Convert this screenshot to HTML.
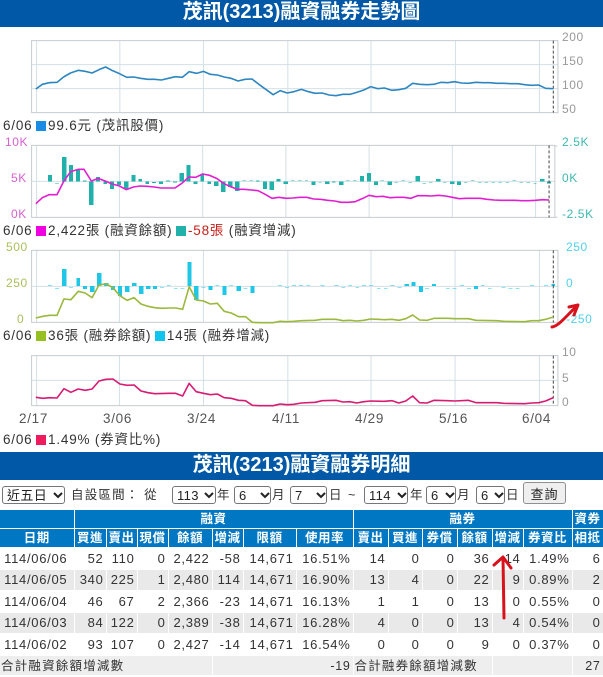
<!DOCTYPE html>
<html lang="zh-Hant"><head><meta charset="utf-8"><title>茂訊融資融券</title>
<style>
html,body{margin:0;padding:0;background:#fff}
body{width:603px;height:677px;position:relative;overflow:hidden;font-family:"Liberation Sans","Noto Sans CJK TC",sans-serif;color:#222}
.bar{position:absolute;left:0;width:603px;background:#0058a6;color:#fff;font-weight:bold;text-align:center;font-size:20px}
.t{position:absolute;white-space:nowrap;line-height:1}
.lg{font-size:13.5px;letter-spacing:.8px;color:#333;left:3px;line-height:16px}
.lg i{display:inline-block;width:10px;height:10px;vertical-align:-1px;margin-left:-1px;margin-right:2px}
.ax{font-size:12px;letter-spacing:.6px}
.tick{font-size:13.5px;letter-spacing:.7px;color:#555}
svg{position:absolute;left:0;top:0}
.g{stroke:#d3e0e6;stroke-width:1;fill:none;vector-effect:non-scaling-stroke}
.b{stroke:#c6ccd0;stroke-width:1;fill:none;vector-effect:non-scaling-stroke}
.l{fill:none;stroke-width:1.6;vector-effect:non-scaling-stroke;stroke-linejoin:round}
.d{stroke:#444;stroke-width:1;stroke-dasharray:3 2;vector-effect:non-scaling-stroke}
select{position:absolute;top:486px;height:18px;box-sizing:border-box;font:13px "Liberation Sans","Noto Sans CJK TC",sans-serif;letter-spacing:.4px;background:#fff;border:1px solid #767676;border-radius:3px;padding:0 0 0 4px;color:#222;appearance:none;-webkit-appearance:none}
.s{position:absolute;top:488px;font-size:12.5px;line-height:14px;color:#333;white-space:nowrap;letter-spacing:1.2px}
button{position:absolute;left:523px;top:482px;width:43px;height:22px;font:13px "Liberation Sans","Noto Sans CJK TC",sans-serif;letter-spacing:1px;background:#efefef;border:1px solid #8f8f8f;border-radius:3px;padding:0;color:#222}
table{position:absolute;left:0;top:510px;width:603px;table-layout:fixed;border-collapse:collapse;font-size:13px;letter-spacing:.7px;color:#333}
td,th{padding:0 2px 0 0;border:1px solid #fff;border-width:0 1px 1px 0;white-space:nowrap;overflow:hidden;text-align:right}
th{background:#0077c2;color:#fff;text-align:center;font-size:12.5px;letter-spacing:.5px;font-weight:bold;height:18px;line-height:16px;padding:0}
td{height:20px;line-height:16px}
tr.z td{background:#e9e9e9}
tr.f td{background:#eeeeee;height:19px;font-size:12.5px}
td.c{text-align:center}
td.lf{text-align:left;letter-spacing:1.2px;padding-left:1px}
</style></head><body>
<div class="bar" style="top:0;height:27px;line-height:25px">茂訊(3213)融資融券走勢圖</div>

<svg width="603" height="677" viewBox="0 0 603 677">
<g transform="scale(.38531,.33333)">
 <path class="g" d="M82 194H1448M82 266H1448M95 122V338M311 122V338M528 122V338M747 122V338M963 122V338M1182 122V338M1400 122V338"/>
 <path class="b" d="M82 122H1448V338H82Z"/>
 <path class="d" d="M1436 122V338"/>
 <polyline class="l" stroke="#2e86c1" points="93,267 110,253 128,248 148,247 165,231 183,219 203,211 221,214 239,219 257,209 274,201 292,212 310,221 329,232 347,231 365,235 383,238 401,238 419,240 437,235 455,230 473,232 491,215 510,220 528,214 546,223 564,225 582,231 600,235 618,243 636,238 654,237 673,254 691,269 709,284 727,272 745,279 763,275 782,268 800,275 818,280 836,279 854,285 872,287 890,283 908,283 926,277 944,270 962,260 980,266 998,264 1017,271 1035,269 1053,265 1071,250 1089,253 1108,254 1126,253 1144,247 1162,248 1180,245 1198,249 1216,250 1235,247 1253,248 1271,248 1289,250 1307,250 1326,251 1344,251 1362,254 1380,256 1398,255 1416,265 1436,266"/>

 <path class="g" d="M82 544H1440M95 436V652M310 436V652M526 436V652M742 436V652M958 436V652M1174 436V652M1390 436V652"/>
 <path class="b" d="M82 436H1440V652H82Z M1440 438H1447M1440 652H1447"/>
 <path fill="#20b2aa" shape-rendering="crispEdges" d="M125 525h10v19h-10zM143 549h10v2h-10zM161 471h11v73h-11zM179 495h11v49h-11zM197 510h11v34h-11zM215 541h10v3h-10zM231 544h12v71h-12zM249 531h11v13h-11zM268 544h10v8h-10zM286 544h10v23h-10zM304 544h10v11h-10zM322 544h11v24h-11zM341 525h11v19h-11zM359 537h10v7h-10zM377 544h10v8h-10zM395 546h10v3h-10zM413 544h10v8h-10zM431 541h10v3h-10zM449 545h10v2h-10zM466 519h11v25h-11zM484 495h11v49h-11zM502 544h10v8h-10zM520 522h10v22h-10zM538 544h10v8h-10zM556 544h11v14h-11zM574 544h11v32h-11zM592 544h11v17h-11zM610 544h11v29h-11zM629 541h9v2h-9zM647 541h9v2h-9zM665 542h9v2h-9zM682 544h11v23h-11zM700 544h11v26h-11zM718 537h10v7h-10zM736 544h11v8h-11zM755 541h9v2h-9zM773 541h9v2h-9zM791 541h9v2h-9zM808 544h11v11h-11zM826 546h9v2h-9zM844 544h11v8h-11zM862 545h9v2h-9zM880 544h11v11h-11zM898 541h9v2h-9zM916 541h9v2h-9zM934 528h11v16h-11zM952 519h11v25h-11zM970 544h11v11h-11zM988 541h9v2h-9zM1006 544h11v11h-11zM1024 547h9v2h-9zM1042 541h9v2h-9zM1060 547h9v2h-9zM1079 528h11v16h-11zM1096 549h9v2h-9zM1114 547h9v2h-9zM1132 537h11v7h-11zM1150 547h9v2h-9zM1168 544h11v8h-11zM1186 544h11v11h-11zM1204 547h9v2h-9zM1222 541h9v2h-9zM1240 547h9v2h-9zM1258 547h9v2h-9zM1276 547h9v2h-9zM1294 547h9v2h-9zM1312 547h9v2h-9zM1330 541h9v2h-9zM1348 547h9v2h-9zM1366 547h9v2h-9zM1384 549h9v2h-9zM1402 537h11v7h-11zM1420 544h10v7h-10z"/>
 <path class="d" d="M1425 436V652"/>
 <polyline class="l" stroke="#e01fd0" points="93,611 110,593 128,584 148,584 165,545 183,515 203,508 218,508 237,543 255,535 273,543 291,552 310,558 328,569 346,561 364,558 382,559 400,561 418,564 436,564 454,564 472,550 490,531 508,532 526,522 544,526 562,535 580,550 598,560 616,568 634,568 652,570 670,572 688,583 706,595 724,592 742,595 760,594 778,592 796,592 814,597 832,598 850,601 868,603 886,607 904,607 922,605 940,596 958,586 976,590 994,589 1012,593 1030,592 1048,592 1066,595 1084,587 1102,587 1120,588 1138,586 1156,588 1174,592 1192,596 1210,595 1228,595 1246,595 1264,598 1282,600 1300,601 1318,601 1336,601 1354,602 1372,602 1390,601 1408,599 1425,600"/>
</g>

<g transform="translate(0,235) scale(.38531,.33333)">
 <path class="g" d="M82 154H1448M95 46V262M310 46V262M528 46V262M747 46V262M963 46V262M1181 46V262M1400 46V262"/>
 <path class="b" d="M82 46H1448V262H82Z"/>
 <path fill="#1fc6e6" shape-rendering="crispEdges" d="M125 150h10v2h-10zM143 159h10v2h-10zM161 102h11v51h-11zM179 156h10v2h-10zM198 129h10v24h-10zM216 153h10v9h-10zM234 153h11v18h-11zM252 114h11v39h-11zM270 144h11v9h-11zM288 153h11v12h-11zM306 153h11v30h-11zM325 153h11v18h-11zM343 144h11v9h-11zM361 153h11v24h-11zM379 153h11v9h-11zM397 153h11v9h-11zM415 156h10v2h-10zM433 150h10v2h-10zM451 159h10v2h-10zM469 159h10v2h-10zM486 81h11v72h-11zM504 153h11v42h-11zM523 156h10v2h-10zM541 153h11v12h-11zM559 150h10v2h-10zM577 153h11v27h-11zM595 150h10v2h-10zM614 153h11v15h-11zM632 159h10v2h-10zM650 153h11v21h-11zM722 150h10v2h-10zM740 156h10v2h-10zM758 150h10v2h-10zM776 150h10v2h-10zM795 150h10v2h-10zM832 150h10v2h-10zM868 150h10v2h-10zM886 156h10v2h-10zM904 150h10v2h-10zM922 156h10v2h-10zM940 150h10v2h-10zM958 150h10v2h-10zM978 159h10v2h-10zM996 159h10v2h-10zM1014 150h10v2h-10zM1032 156h10v2h-10zM1050 147h11v6h-11zM1068 141h11v12h-11zM1087 153h11v18h-11zM1103 159h10v2h-10zM1121 147h11v6h-11zM1157 159h10v2h-10zM1175 159h10v2h-10zM1194 150h10v2h-10zM1212 159h10v2h-10zM1230 153h11v9h-11zM1248 150h10v2h-10zM1266 159h10v2h-10zM1302 156h10v2h-10zM1320 159h10v2h-10zM1338 159h10v2h-10zM1376 150h10v2h-10zM1412 150h10v2h-10zM1431 147h10v6h-10z"/>
 <path class="d" d="M1436 46V262"/>
 <polyline class="l" stroke="#9ab93c" points="93,249 111,244 129,241 148,241 166,192 184,194 203,169 221,174 239,188 257,150 275,146 293,158 311,182 330,196 348,188 366,207 384,214 402,218 420,220 438,219 456,219 474,223 491,155 509,195 528,198 546,207 564,205 582,229 600,234 619,245 637,245 655,262 673,263 709,263 727,259 745,260 763,259 782,257 818,256 836,253 872,253 890,257 908,256 926,258 944,256 962,252 980,253 998,254 1017,253 1035,256 1053,251 1071,240 1089,255 1108,256 1126,250 1162,250 1180,251 1216,251 1235,256 1289,257 1307,259 1362,260 1380,257 1398,257 1416,253 1436,246"/>

 <path class="g" d="M82 436H1448M95 362V512M310 362V512M528 362V512M747 362V512M963 362V512M1181 362V512M1400 362V512"/>
 <path class="b" d="M82 362H1448V512H82Z"/>
 <path class="d" d="M1436 362V512"/>
 <polyline class="l" stroke="#d81b72" points="93,487 111,490 129,488 148,489 166,461 184,472 203,462 221,466 239,462 257,438 275,433 293,432 311,447 330,451 348,450 366,468 384,473 402,476 438,475 456,475 474,483 491,445 509,470 528,475 546,479 564,477 582,488 600,490 619,496 637,497 655,511 673,512 709,512 727,507 745,509 763,508 782,504 818,502 836,497 872,496 890,501 908,500 926,504 944,500 962,498 998,499 1017,497 1035,504 1053,498 1071,483 1089,503 1108,504 1126,496 1162,497 1180,498 1216,496 1235,503 1289,503 1307,505 1362,506 1380,504 1398,503 1416,498 1436,488"/>
</g>
</svg>

<div class="t ax" style="left:562px;top:31px;color:#999">200</div>
<div class="t ax" style="left:562px;top:55px;color:#999">150</div>
<div class="t ax" style="left:562px;top:79px;color:#999">100</div>
<div class="t ax" style="left:562px;top:103px;color:#999">50</div>
<div class="t lg" style="top:118px">6/06 <i style="background:#1b8ce3"></i>99.6元 (茂訊股價)</div>

<div class="t ax" style="left:5px;top:136px;color:#d860cf">10K</div>
<div class="t ax" style="left:11px;top:172px;color:#d860cf">5K</div>
<div class="t ax" style="left:11px;top:208px;color:#d860cf">0K</div>
<div class="t ax" style="left:562px;top:136px;color:#3fb7b0">2.5K</div>
<div class="t ax" style="left:562px;top:172px;color:#3fb7b0">0K</div>
<div class="t ax" style="left:562px;top:208px;color:#3fb7b0">-2.5K</div>
<div class="t lg" style="top:223px">6/06 <i style="background:#f000e0"></i>2,422張 (融資餘額) <i style="background:#20b2aa"></i><span style="color:#c8201c">-58張</span> (融資增減)</div>

<div class="t ax" style="left:6px;top:241px;color:#a8bf5e">500</div>
<div class="t ax" style="left:6px;top:277px;color:#a8bf5e">250</div>
<div class="t ax" style="left:17px;top:313px;color:#a8bf5e">0</div>
<div class="t ax" style="left:566px;top:241px;color:#4fd0e8">250</div>
<div class="t ax" style="left:566px;top:277px;color:#4fd0e8">0</div>
<div class="t ax" style="left:566px;top:313px;color:#4fd0e8">-250</div>
<div class="t lg" style="top:328px">6/06 <i style="background:#95bf22"></i>36張 (融券餘額) <i style="background:#10c4ee"></i>14張 (融券增減)</div>

<div class="t ax" style="left:562px;top:346px;color:#999">10</div>
<div class="t ax" style="left:562px;top:372px;color:#999">5</div>
<div class="t ax" style="left:562px;top:396px;color:#999">0</div>
<div class="t tick" style="left:19px;top:412px">2/17</div>
<div class="t tick" style="left:103px;top:412px">3/06</div>
<div class="t tick" style="left:187px;top:412px">3/24</div>
<div class="t tick" style="left:272px;top:412px">4/11</div>
<div class="t tick" style="left:355px;top:412px">4/29</div>
<div class="t tick" style="left:439px;top:412px">5/16</div>
<div class="t tick" style="left:522px;top:412px">6/04</div>
<div class="t lg" style="top:432px">6/06 <i style="background:#ee1a5e"></i>1.49% (券資比%)</div>

<div class="bar" style="top:452px;height:28px;line-height:26px">茂訊(3213)融資融券明細</div>

<select style="left:2px;width:63px"><option>近五日</option></select>
<div class="s" style="left:71px">自設區間： 從</div>
<select style="left:172px;width:44px"><option>113</option></select><div class="s" style="left:217px">年</div>
<select style="left:234px;width:37px"><option>6</option></select><div class="s" style="left:272px">月</div>
<select style="left:290px;width:37px"><option>7</option></select><div class="s" style="left:329px">日</div>
<div class="s" style="left:348px">~</div>
<select style="left:364px;width:44px"><option>114</option></select><div class="s" style="left:410px">年</div>
<select style="left:426px;width:30px"><option>6</option></select><div class="s" style="left:457px">月</div>
<select style="left:476px;width:29px"><option>6</option></select><div class="s" style="left:506px">日</div>
<button>查詢</button>
<svg width="603" height="677" viewBox="0 0 603 677" style="pointer-events:none">
<path d="M54 493l4 4 4-4M205 493l4 4 4-4M261 493l4 4 4-4M317 493l4 4 4-4M398 493l4 4 4-4M446 493l4 4 4-4M495 493l4 4 4-4" fill="none" stroke="#222" stroke-width="2"/>
</svg>

<table>
<colgroup><col style="width:74px"><col style="width:32px"><col style="width:31px"><col style="width:31px"><col style="width:44px"><col style="width:31px"><col style="width:53px"><col style="width:57px"><col style="width:35px"><col style="width:34px"><col style="width:35px"><col style="width:35px"><col style="width:31px"><col style="width:49px"><col style="width:31px"></colgroup>
<tr><th></th><th colspan="7">融資</th><th colspan="6">融券</th><th>資券</th></tr>
<tr><th>日期</th><th>買進</th><th>賣出</th><th>現償</th><th>餘額</th><th>增減</th><th>限額</th><th>使用率</th><th>賣出</th><th>買進</th><th>券償</th><th>餘額</th><th>增減</th><th>券資比</th><th>相抵</th></tr>
<tr style="height:22px"><td class="c" style="height:21px">114/06/06</td><td>52</td><td>110</td><td>0</td><td>2,422</td><td>-58</td><td>14,671</td><td>16.51%</td><td>14</td><td>0</td><td>0</td><td>36</td><td>14</td><td>1.49%</td><td>6</td></tr>
<tr class="z"><td class="c">114/06/05</td><td>340</td><td>225</td><td>1</td><td>2,480</td><td>114</td><td>14,671</td><td>16.90%</td><td>13</td><td>4</td><td>0</td><td>22</td><td>9</td><td>0.89%</td><td>2</td></tr>
<tr><td class="c" style="height:21px">114/06/04</td><td>46</td><td>67</td><td>2</td><td>2,366</td><td>-23</td><td>14,671</td><td>16.13%</td><td>1</td><td>1</td><td>0</td><td>13</td><td>0</td><td>0.55%</td><td>0</td></tr>
<tr class="z"><td class="c">114/06/03</td><td>84</td><td>122</td><td>0</td><td>2,389</td><td>-38</td><td>14,671</td><td>16.28%</td><td>4</td><td>0</td><td>0</td><td>13</td><td>4</td><td>0.54%</td><td>0</td></tr>
<tr><td class="c" style="height:21px">114/06/02</td><td>93</td><td>107</td><td>0</td><td>2,427</td><td>-14</td><td>14,671</td><td>16.54%</td><td>0</td><td>0</td><td>0</td><td>9</td><td>0</td><td>0.37%</td><td>0</td></tr>
<tr class="f"><td class="lf" colspan="5">合計融資餘額增減數</td><td colspan="3">-19</td><td class="lf" colspan="4">合計融券餘額增減數</td><td colspan="2"></td><td>27</td></tr>
</table>

<svg width="603" height="677" viewBox="0 0 603 677" style="z-index:5">
<path d="M552 327C559 326 566 316 577 306M569 307L578 305L574 315" fill="none" stroke="#d8121c" stroke-width="3" stroke-linecap="round" stroke-linejoin="round"/>
<path d="M504 618L503 558M494 565L503 557L511 568" fill="none" stroke="#d8121c" stroke-width="3" stroke-linecap="round" stroke-linejoin="round"/>
</svg>
</body></html>
